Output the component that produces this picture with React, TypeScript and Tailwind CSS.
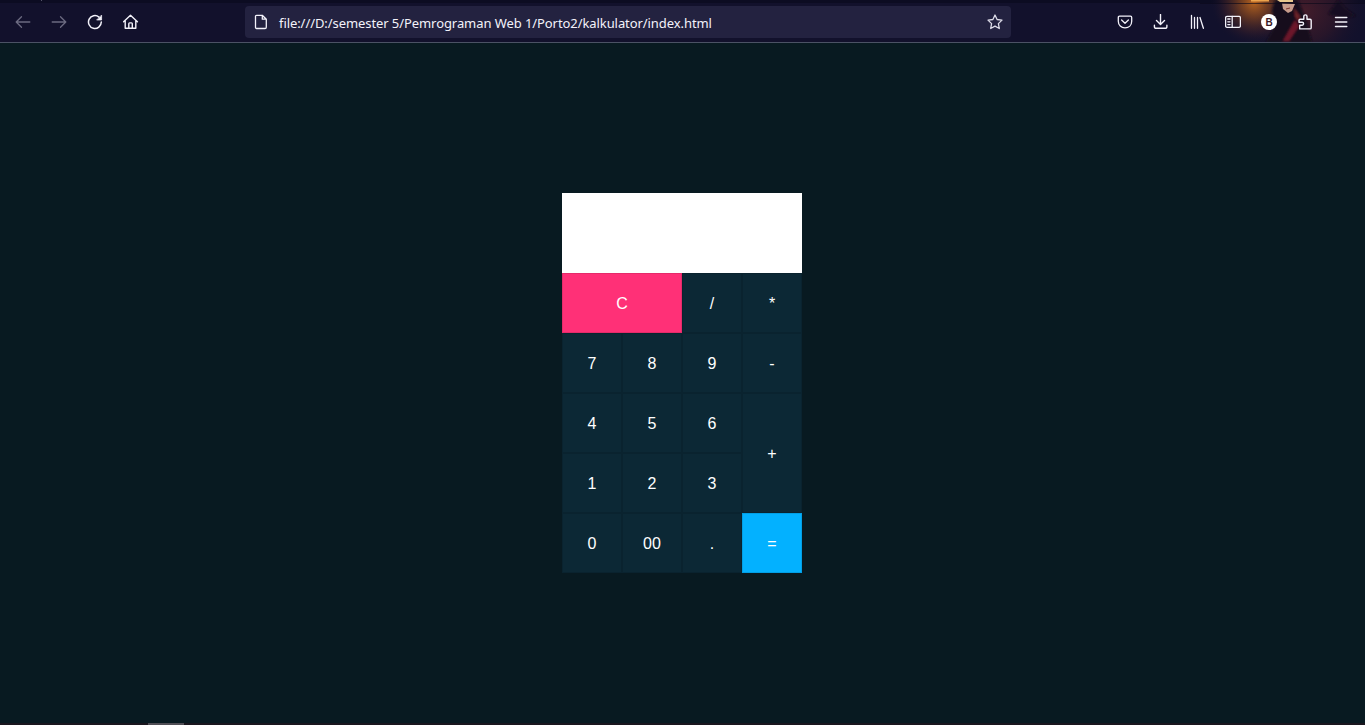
import type { ReactNode } from 'react';

const Icon = ({ children, className = '' }: { children: ReactNode; className?: string }) => (
  <svg
    viewBox="0 0 16 16"
    width="16"
    height="16"
    fill="none"
    stroke="currentColor"
    strokeWidth="1.3"
    strokeLinecap="round"
    strokeLinejoin="round"
    className={`shrink-0 ${className}`}
  >
    {children}
  </svg>
);

const ThemeArt = () => (
  <svg className="absolute right-0 top-0" width="165" height="42" viewBox="0 0 165 42" aria-hidden="true">
    <defs>
      <radialGradient id="glow" cx="54" cy="2" r="44" gradientUnits="userSpaceOnUse">
        <stop offset="0" stopColor="#b8651f" />
        <stop offset="0.35" stopColor="#7a4020" stopOpacity="0.8" />
        <stop offset="0.7" stopColor="#3c2029" stopOpacity="0.5" />
        <stop offset="1" stopColor="#12112c" stopOpacity="0" />
      </radialGradient>
      <radialGradient id="dusk" cx="105" cy="10" r="62" gradientUnits="userSpaceOnUse">
        <stop offset="0" stopColor="#421c2a" />
        <stop offset="0.5" stopColor="#2a1629" stopOpacity="0.9" />
        <stop offset="1" stopColor="#12112c" stopOpacity="0" />
      </radialGradient>
      <filter id="soft" x="-20%" y="-20%" width="140%" height="140%">
        <feGaussianBlur stdDeviation="1.2" />
      </filter>
    </defs>
    <rect width="165" height="42" fill="url(#dusk)" />
    <rect width="165" height="42" fill="url(#glow)" />
    <g filter="url(#soft)">
      <path d="M75 0H98L106 20L112 42H66L75 26L72 10Z" fill="#15101e" />
      <path d="M138 0L145 8L156 16L143 18L128 14Z" fill="#190f20" />
      <path d="M95 20L99 26L89 41H83Z" fill="#6d172b" />
      <path d="M94 8L100 16L99 22L95 17Z" fill="#6c2027" />
    </g>
    <path d="M82 3L95 4L92 11L88 13L83 9Z" fill="#c79c8c" />
    <path d="M86 9L90 8" stroke="#7b3530" />
    <path d="M51 0H69V1.5H51Z" fill="#eca34c" />
    <path d="M77 0H93V2H80Z" fill="#e8c88e" />
    <path d="M0 3.5H165" stroke="#0b091a" strokeOpacity="0.65" />
  </svg>
);

const Toolbar = () => (
  <header className="relative h-[43px] shrink-0 border-b border-[#4b5265] bg-[#12112c] text-[#f3f2fa]">
    <div className="absolute inset-x-0 top-0 h-[3px] bg-[#0c0c22]" />
    <div className="absolute left-[41px] top-0 h-px w-px bg-[#55556a]" />
    <ThemeArt />
    <div className="relative flex h-full items-center pl-[15px] pr-4 pt-[2px]">
      <nav className="flex w-[230px] items-center gap-5">
        <Icon className="text-[#6b6a80]"><path d="M1.2 8H14.8M6.5 2.7L1.2 8L6.5 13.3" /></Icon>
        <Icon className="text-[#6b6a80]"><path d="M1.2 8H14.8M9.5 2.7L14.8 8L9.5 13.3" /></Icon>
        <Icon>
          <path d="M12 3.1A6.4 6.4 0 1 0 14.3 8.1" strokeWidth="1.5" />
          <path d="M14.6 1.4V6H10Z" fill="currentColor" strokeWidth=".7" />
        </Icon>
        <Icon>
          <path d="M.6 7.7L7.5 1.2L14.4 7.7M2.2 6.5V14.2H12.8V6.5M5.8 14V9.8Q5.8 8.9 6.6 8.9H8.5Q9.3 8.9 9.3 9.8V14" strokeWidth="1.4" />
        </Icon>
      </nav>
      <div className="flex h-8 w-[766px] items-center rounded bg-[#232240] px-2">
        <Icon><path d="M3.6 1.3H9.3L13.3 5.3V13.2Q13.3 14.5 12 14.5H3.6Q2.5 14.5 2.5 13.2V2.5Q2.5 1.3 3.6 1.3ZM9.3 1.5V5.2H13" /></Icon>
        <span className="ml-[10px] flex-1 whitespace-nowrap pt-px font-['Noto_Sans',sans-serif] text-[13px] leading-5 tracking-[-0.075px]">
          file:///D:/semester 5/Pemrograman Web 1/Porto2/kalkulator/index.html
        </span>
        <Icon className="text-[#dddce8]"><path d="M8 1L10.1 5.5L15 6.1L11.4 9.6L12.3 14.5L8 12.1L3.7 14.5L4.6 9.6L1 6.1L5.9 5.5Z" /></Icon>
      </div>
      <div className="ml-auto flex items-center gap-5">
        <Icon>
          <path d="M2.6 2.2H13.4Q14.7 2.2 14.7 3.5V7.2C14.7 11.2 11.8 13.8 8 13.8S1.3 11.2 1.3 7.2V3.5Q1.3 2.2 2.6 2.2ZM4.6 6L8 9.2L11.4 6" />
        </Icon>
        <Icon>
          <path d="M7.5 .5V10.3M3.5 6.5L7.5 10.4L11.5 6.5M1.4 11.2V12.4Q1.4 14.3 3.3 14.3H12Q13.9 14.3 13.9 12.4V11.2" strokeWidth="1.4" />
        </Icon>
        <Icon><path d="M2.5 1.5V14.3M5.5 3.5V14.3M8.5 3.5V14.3M11 3.5L14.4 14.3" /></Icon>
        <Icon>
          <rect x=".6" y="2.4" width="14.8" height="11" rx="1.4" />
          <path d="M7.2 2.5V13.3M2.8 5H5M2.8 7.8H5M2.8 10.6H5" />
        </Icon>
        <span className="flex size-4 items-center justify-center rounded-full bg-white pt-px font-['Liberation_Sans',sans-serif] text-[10px] font-bold leading-none text-[#3b1723]">
          B
        </span>
        <Icon>
          <path d="M2.7 14.9V11.3H5.1A1.5 1.5 0 0 0 5.1 8.3H2V6.4Q2 5.2 3.2 5.2H6.8V2.5A1.6 1.6 0 0 1 10 2.5V5.2H13Q14.2 5.2 14.2 6.4V13.7Q14.2 14.9 13 14.9Z" strokeWidth="1.4" />
        </Icon>
        <Icon><path d="M2.5 3.5H13.8M2.5 8H13.8M2.5 12.5H13.8" strokeWidth="1.4" /></Icon>
      </div>
    </div>
  </header>
);

const keys: { label: string; style?: string }[] = [
  { label: 'C', style: 'col-span-2 bg-[#ff3077]' },
  { label: '/' },
  { label: '*' },
  { label: '7' },
  { label: '8' },
  { label: '9' },
  { label: '-' },
  { label: '4' },
  { label: '5' },
  { label: '6' },
  { label: '+', style: 'row-span-2' },
  { label: '1' },
  { label: '2' },
  { label: '3' },
  { label: '0' },
  { label: '00' },
  { label: '.' },
  { label: '=', style: 'bg-[#03b1ff]' },
];

const Calculator = () => (
  <div className="ml-[-1px] grid grid-cols-[repeat(4,60px)] grid-rows-[80px_repeat(5,60px)] bg-[#0c2835] font-['Liberation_Sans',sans-serif] text-base text-white">
    <div className="col-span-4 bg-white" />
    {keys.map(({ label, style = '' }) => (
      <button key={label} className={`flex items-center justify-center border border-black/10 pt-[2px] ${style}`}>
        {label}
      </button>
    ))}
  </div>
);

export default function App() {
  return (
    <div className="flex h-screen flex-col overflow-hidden bg-[#081a21]">
      <Toolbar />
      <main className="flex flex-1 items-center justify-center">
        <Calculator />
      </main>
      <footer className="h-[2px] shrink-0 bg-[#1a161e] pl-[148px]">
        <div className="h-full w-9 bg-[#504e55]" />
      </footer>
    </div>
  );
}
